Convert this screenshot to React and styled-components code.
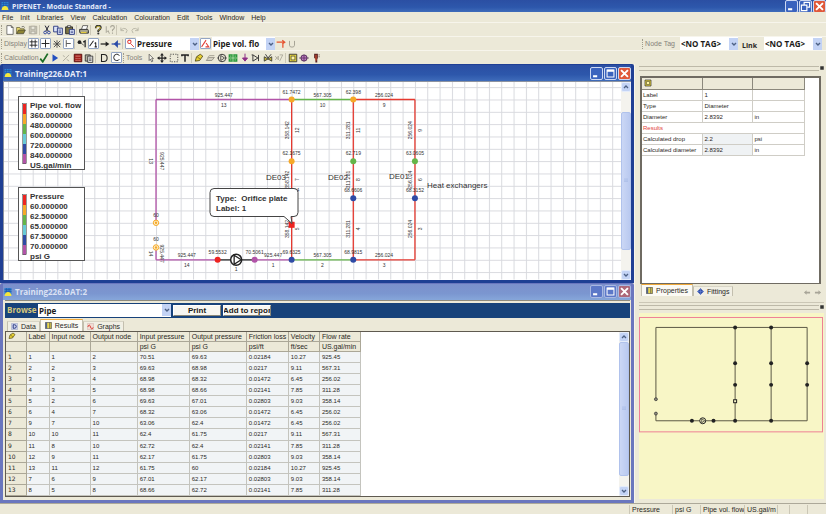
import React from 'react';
import styled, { createGlobalStyle, css, ThemeProvider } from 'styled-components';

const theme = {
  face: '#ece9d8',
  line: '#aca899',
  dark: '#5f5a50',
  active: 'linear-gradient(#2b4fa3, #2d57ab 60%, #3f6cba)',
  inactive: 'linear-gradient(#7c90cc, #7b96d0 60%, #86a6da)',
  ui: '"Liberation Sans", Arial, sans-serif',
  strong: '"Open Sans", "Noto Sans", sans-serif',
};

const GlobalStyle = createGlobalStyle`
  * { box-sizing: border-box; }
  body {
    margin: 0;
    background: #ece9d8;
    color: #2a2824;
    font: 7px/9px "Liberation Sans", Arial, sans-serif;
  }
  button, select { font: inherit; color: inherit; margin: 0; padding: 0; border: 0; background: none; }
`;

/* ---------- shell ---------- */

const Shell = styled.div`
  display: flex;
  flex-direction: column;
  height: 100vh;
  overflow: hidden;
`;

const TitleBar = styled.header`
  display: flex;
  align-items: center;
  gap: 2px;
  height: 12px;
  padding-left: 1px;
  overflow: hidden;
  background: ${({ theme: t }) => t.active};
  color: #e4eafa;
  font-family: ${({ theme: t }) => t.strong};
  font-weight: 700;
  h1 {
    flex: 1;
    margin: 0;
    padding-left: 1px;
    font-size: 7px;
    line-height: 9px;
  }
`;

const MenuBar = styled.nav`
  display: flex;
  gap: 7px;
  height: 10px;
  padding-left: 2px;
  align-items: center;
`;

const Toolbar = styled.div`
  display: flex;
  align-items: center;
  height: 14px;
  padding-left: 1px;
  border-top: 1px solid #f7f5ec;
`;

const Grip = styled.span`
  width: 3px;
  height: 10px;
  border-left: 1px dotted #a09c8c;
`;

const Separator = styled.span`
  width: 2px;
  height: 10px;
  border-left: 1px solid #cbc7b6;
`;

const ToolLabel = styled.span`
  width: ${({ $width }) => $width}px;
  color: #85827a;
  white-space: nowrap;
`;

const ToolGroup = styled.div`
  display: flex;
  justify-content: space-around;
  align-items: center;
  width: ${({ $width }) => $width}px;
`;

const ToolButton = styled.button`
  display: grid;
  place-items: center;
  width: 11px;
  height: 11px;
  ${({ $pressed }) => $pressed && css`
    background: #fff;
    border: 1px solid #93a5c4;
    border-radius: 1px;
  `}
  svg {
    width: ${({ $pressed }) => ($pressed ? 9 : 10)}px;
    height: ${({ $pressed }) => ($pressed ? 9 : 10)}px;
  }
`;

const Combo = styled.span`
  display: grid;
  grid-template-columns: 1fr 9px;
  align-items: center;
  width: ${({ $width }) => $width}px;
  height: 13px;
  background: #fff;
  select {
    appearance: none;
    grid-area: 1 / 1 / 2 / 3;
    height: 13px;
    padding: 1px 0 0 1px;
    color: #1c1a18;
    font: 700 8px/12px ${({ theme: t }) => t.strong};
  }
  svg {
    grid-area: 1 / 2 / 2 / 3;
    width: 9px;
    height: 12px;
    pointer-events: none;
  }
`;

const TagTools = styled.div`
  display: flex;
  align-items: center;
  margin-left: auto;
  padding-right: 4px;
`;

const LinkLabel = styled.label`
  margin: 3px 7px 0 4px;
  font: 700 7px/9px ${({ theme: t }) => t.strong};
`;

const NodeLabel = styled.label`
  margin-right: 5px;
  color: #85827a;
  white-space: nowrap;
`;

/* ---------- document windows ---------- */

const Workspace = styled.main`
  display: flex;
  flex: 1;
  min-height: 0;
`;

const Documents = styled.div`
  display: flex;
  flex-direction: column;
  flex: 1;
  min-width: 0;
`;

const DocWindow = styled.section`
  display: flex;
  flex-direction: column;
  flex: ${({ $size }) => $size};
  min-height: 0;
  border: 1px solid ${({ $active }) => ($active ? '#1f3f94' : '#6a76be')};
  border-width: 1px 3px 3px;
  border-radius: 2px 2px 0 0;
  background: ${({ theme: t }) => t.face};
`;

const DocTitle = styled.header`
  display: flex;
  align-items: center;
  height: 16px;
  padding-left: 1px;
  background: ${({ theme: t, $active }) => ($active ? t.active : t.inactive)};
  color: ${({ $active }) => ($active ? '#e8edfb' : '#dbe2f4')};
  h2 {
    flex: 1;
    margin: 0 0 0 3px;
    font: 700 8px/11px ${({ theme: t }) => t.strong};
  }
`;

const Controls = styled.div`
  display: flex;
  gap: 1px;
`;

const ControlButton = styled.button`
  display: grid;
  width: 13px;
  height: 13px;
  border: 1px solid ${({ $dim }) => ($dim ? '#a9b8e2' : '#cdd8f2')};
  border-radius: 2px;
  background: ${({ $close, $dim }) => {
    if ($close) return $dim ? '#ad6879' : '#e0583a';
    return $dim ? '#5c78c8' : '#3a63be';
  }};
  svg { width: 11px; height: 11px; }
`;

const Canvas = styled.div`
  display: flex;
  flex: 1;
  min-height: 0;
  border: 1px solid #8d93a0;
  border-width: 1px 0 0 1px;
  background: #fff;
  > svg { flex: 1; min-width: 0; height: 100%; }
`;

const ScrollTrack = styled.div`
  display: flex;
  flex-direction: column;
  width: 10px;
  background: #f4f3ee;
`;

const ScrollButton = styled.button`
  width: 10px;
  height: 10px;
  border: 1px solid #e4ecfb;
  border-radius: 2px;
  background: #c3d3f5;
  display: grid;
  svg { width: 8px; height: 8px; }
`;

const ScrollThumb = styled.div`
  display: grid;
  place-items: center;
  flex: ${({ $size }) => $size};
  border: 1px solid #b0c2ec;
  border-radius: 2px;
  background: linear-gradient(90deg, #cbd7f5, #b9c9f0);
  color: #9fb3e0;
  svg { width: 4px; height: 5px; }
`;

const ScrollSpace = styled.span`
  flex: ${({ $size }) => $size};
`;

/* ---------- results browser ---------- */

const Browser = styled.div`
  display: flex;
  flex-direction: column;
  flex: 1;
  min-height: 0;
  margin: 0 1px 3px 2px;
  padding-top: 2px;
  border-top: 1px solid #8e8a7c;
`;

const BrowseBar = styled.div`
  display: flex;
  align-items: center;
  height: 15px;
  margin-bottom: 1px;
  padding-left: 2px;
  background: #17427a;
  color: #d6c77a;
  label { width: 31px; font: 700 8px/12px ${({ theme: t }) => t.strong}; }
`;

const PushButton = styled.button`
  width: 48px;
  height: 11px;
  margin-left: 2px;
  overflow: hidden;
  display: flex;
  justify-content: center;
  align-items: center;
  white-space: nowrap;
  background: #f7f6f1;
  border: 1px solid;
  border-color: #fff #8b8878 #8b8878 #fff;
  color: #1c1a18;
  font: 700 8px/9px ${({ theme: t }) => t.ui};
`;

const Tabs = styled.div`
  display: flex;
  align-items: flex-end;
  padding-left: ${({ $indent }) => $indent || 0}px;
`;

const Tab = styled.button`
  display: flex;
  align-items: center;
  gap: 3px;
  height: ${({ $selected }) => ($selected ? 12 : 10)}px;
  padding: 0 ${({ $selected }) => ($selected ? 4 : 3)}px;
  border: 1px solid #c3bfae;
  border-top-color: ${({ $selected }) => ($selected ? '#f0a93a' : '#d8d5c6')};
  border-bottom: 0;
  background: ${({ $selected }) => ($selected ? '#fbfaf4' : '#f1efe4')};
  color: #2a2824;
  white-space: nowrap;
  svg { width: 7px; height: 7px; }
`;

const GridArea = styled.div`
  display: flex;
  justify-content: space-between;
  flex: 1;
  min-height: 0;
  overflow: hidden;
  border: 1px solid ${({ theme: t }) => t.dark};
  background: #fff;
`;

const ResultTable = styled.table`
  height: 100%;
  border-collapse: collapse;
  table-layout: fixed;
  width: 355px;
  th, td {
    height: 10px;
    padding: 0 2px;
    text-align: left;
    white-space: nowrap;
    font-weight: 400;
    border-right: 1px solid #c4c4be;
    border-bottom: 1px solid #c4c4be;
  }
  th {
    background: #ece9d8;
    border-color: #aba797;
  }
  td {
    background: #f1f4f6;
    font-size: 6px;
    line-height: 8px;
  }
  tbody th { font: 6px/8px "DejaVu Sans", sans-serif; }
  svg { display: block; width: 8px; height: 8px; }
`;

/* ---------- side panels ---------- */

const Side = styled.aside`
  display: flex;
  flex-direction: column;
  width: 192px;
  padding: 2px 2px 0 4px;
  border-left: 1px solid #f7f5ec;
`;

const DockHandle = styled.div`
  display: flex;
  align-items: center;
  justify-content: flex-end;
  height: 4px;
  margin-bottom: ${({ $gap }) => $gap}px;
  &::before {
    content: '';
    flex: 1;
    height: 3px;
    border: 1px solid #bdb9a8;
    border-width: 1px 0;
  }
  svg { width: 4px; height: 4px; margin-left: 1px; }
`;

const Properties = styled.div`
  flex: 1;
  min-height: 0;
  margin: 0 3px 0 1px;
  border: 2px solid #6f6b62;
  border-bottom-width: 1px;
  background: #fff;
  overflow: hidden;
`;

const PropertyTable = styled.table`
  width: 162px;
  border-collapse: collapse;
  table-layout: fixed;
  font-size: 6px;
  line-height: 8px;
  th, td {
    height: 11px;
    padding: 0 2px;
    text-align: left;
    font-weight: 400;
    white-space: nowrap;
    border-right: 1px solid #cfcdc6;
    border-bottom: 1px solid #cfcdc6;
  }
  thead th { background: #ece9d8; border-color: #8b887c; }
  thead svg { display: block; width: 8px; height: 8px; }
  tbody th:first-child { padding-left: 1px; }
`;

const ResultHeading = styled.th`
  color: #e2413a;
`;

const ReadOnly = styled.td`
  background: #eff2f4;
`;

const PanelFooter = styled.div`
  display: flex;
  justify-content: space-between;
  align-items: flex-start;
  height: 19px;
  margin-bottom: 2px;
  padding: 0 2px;
  border-bottom: 1px solid #cbc7b6;
`;

const Pager = styled.div`
  display: flex;
  gap: 3px;
  padding-top: 5px;
  color: #a8a598;
  button { display: grid; }
  svg { width: 8px; height: 7px; }
`;

const Overview = styled.div`
  flex: 0 0 186px;
  margin-bottom: 4px;
  background: #f8f6c6;
  svg { display: block; width: 100%; height: 100%; }
`;

const StatusBar = styled.footer`
  display: flex;
  justify-content: flex-end;
  height: 11px;
  padding-top: 1px;
  border-top: 1px solid ${({ theme: t }) => t.line};
  overflow: hidden;
`;

const StatusCell = styled.span`
  width: ${({ $width }) => $width}px;
  padding-left: 2px;
  border-left: 1px solid #cbc7b6;
  white-space: nowrap;
`;

/* ---------- icons ---------- */

const glyphs = {
  new: <path d="M3 1h7l3 3v11H3zM10 1v3h3" fill="#fff" stroke="#333" />,
  open: <><path d="M1 14V4h5l1 2h6v3" fill="#e9d96b" stroke="#4b4624" /><path d="M1 14l3-6h11l-3 6z" fill="#8d8434" stroke="#333" /><path d="M9 3q3-2 5 1" fill="none" stroke="#333" /></>,
  save: <><path d="M2 2h12v12H2z" fill="#c9c6b8" stroke="#a09d90" /><path d="M5 2h6v5H5zM5 10h6v4H5z" fill="#e9e7dc" stroke="#a09d90" /></>,
  cut: <><path d="M5 1l5 9M11 1L6 10" stroke="#223" strokeWidth="1.6" /><circle cx="5" cy="12" r="2.2" fill="none" stroke="#33489c" strokeWidth="1.6" /><circle cx="11" cy="12" r="2.2" fill="none" stroke="#33489c" strokeWidth="1.6" /></>,
  copy: <><path d="M1 2h7v9H1z" fill="#dce4f8" stroke="#26337e" strokeWidth="1.4" /><path d="M7 5h8v10H7z" fill="#dce4f8" stroke="#26337e" strokeWidth="1.4" /><path d="M9 8h4M9 10h4M9 12h4" stroke="#26337e" /></>,
  paste: <><path d="M1 3h11v11H1z" fill="#7c7443" stroke="#222" strokeWidth="1.4" /><path d="M4 1h5v3H4z" fill="#ddd" stroke="#222" /><path d="M7 7h8v8H7z" fill="#dce4f8" stroke="#26337e" strokeWidth="1.4" /><path d="M9 10h4M9 12h4" stroke="#26337e" /></>,
  print: <><path d="M4 7l2-6h8l-2 6" fill="#fff" stroke="#222" /><path d="M1 7h13l1 2v4H2l-1-2z" fill="#a9a692" stroke="#222" strokeWidth="1.4" /><path d="M3 12h9" stroke="#e2c93b" strokeWidth="2" /></>,
  help: <><path d="M4.500 5q0-4 4-4t4 3.500q0 2-4 4.500v2" fill="none" stroke="#333" strokeWidth="3" /><path d="M5 5q0-3 3.500-3t3.500 2.500q0 2-3.500 4" fill="none" stroke="#d9c62b" strokeWidth="1.200" /><circle cx="8.500" cy="13.500" r="1.700" fill="#333" /></>,
  what: <><path d="M2 2v10l3-3 2 5" fill="none" stroke="#a7a496" strokeWidth="1.500" /><path d="M9 4q0-3 3-3t3 3q0 2-3 4v2M12 12v2" fill="none" stroke="#a7a496" strokeWidth="1.700" /></>,
  undo: <path d="M3 4v5h5M3 8q4-4 8-2t0 7" fill="none" stroke="#b9b6a6" strokeWidth="1.500" />,
  redo: <path d="M13 4v5H8M13 8q-4-4-8-2t0 7" fill="none" stroke="#b9b6a6" strokeWidth="1.500" />,
  grid: <path d="M5 1v14M11 1v14M1 5h14M1 11h14" stroke="#222" strokeWidth="1.600" />,
  plus: <path d="M8 1v14M1 8h14" stroke="#222" strokeWidth="1.700" />,
  star: <path d="M8 2v12M2 8h12M3 3l10 10M13 3L3 13" stroke="#444" strokeWidth="1.400" />,
  tee: <path d="M4 2v12M4 8h8" stroke="#555" strokeWidth="1.700" />,
  nodes: <><circle cx="4" cy="5" r="3" fill="#222" /><path d="M4 5l7 5" stroke="#222" /><path d="M10 5l3-2v10" fill="none" stroke="#222" strokeWidth="2" /></>,
  pipe: <path d="M1 13L8 3M12 6v8M10 8l2-2M10 14h4" fill="none" stroke="#222" strokeWidth="1.800" />,
  arrowHead: <><path d="M1 8h9" stroke="#222" strokeWidth="2" /><path d="M9 4l6 4-6 4z" fill="#222" /></>,
  blueArrow: <><path d="M1 8h14" stroke="#2a4ba8" strokeWidth="2" /><path d="M6 8l4-4v8z" fill="#2a4ba8" stroke="#2a4ba8" strokeWidth="2" /></>,
  redNode: <><circle cx="6" cy="5" r="3" fill="none" stroke="#e23c34" strokeWidth="1.800" /><path d="M8 8l6 6" stroke="#e23c34" strokeWidth="1.600" /></>,
  redPipe: <path d="M1 14L9 2M9 7l5 7H8" fill="none" stroke="#e23c34" strokeWidth="1.800" />,
  redArrow: <path d="M1 5h13M10 2l4 3-4 3M11 8v6" fill="none" stroke="#e6532f" strokeWidth="2" />,
  unit: <path d="M4 3v7q0 3 4 3t4-3V3" fill="none" stroke="#a7a496" strokeWidth="1.600" />,
  check: <path d="M2 9l4 5L14 1" fill="none" stroke="#1c6d25" strokeWidth="2.800" />,
  play: <path d="M4 2l9 6-9 6z" fill="#2450c0" />,
  graph: <path d="M3 13L13 3M3 4l3 2M9 10l4 3" stroke="#b4b1a3" strokeWidth="1.600" />,
  calendar: <><path d="M2 2h12v12H2z" fill="#a6201c" stroke="#5f1512" strokeWidth="1.600" /><path d="M4 9h8M4 12h8" stroke="#e8b6a6" strokeDasharray="2 1" /><path d="M4 5h8" stroke="#e8b6a6" /></>,
  report: <><path d="M2 3h8v10H2z" fill="#b5b1a0" stroke="#333" strokeWidth="1.400" /><path d="M6 5h8v10H6z" fill="#eee" stroke="#333" strokeWidth="1.400" /><path d="M8 8h4M8 10h4M8 12h4" stroke="#333" /></>,
  letterD: <path d="M4 2.500h4q5 0 5 5.500t-5 5.500H4z" fill="none" stroke="#222" strokeWidth="1.700" />,
  letterC: <path d="M13 5q-1-3-4.500-3Q3 2.500 3 8t5.500 5.500Q12 13.500 13 11" fill="none" stroke="#222" strokeWidth="1.700" />,
  cursor: <path d="M5 2v10l2-2 2 4 2-1-2-4h3z" fill="#f4f2ea" stroke="#333" />,
  move: <><path d="M8 3v10M3 8h10" stroke="#222" strokeWidth="2" /><path d="M8 0l3 4H5zM8 16l3-4H5zM0 8l4-3v6zM16 8l-4-3v6z" fill="#222" /></>,
  marquee: <path d="M2 2h12v12H2z" fill="none" stroke="#333" strokeWidth="1.300" strokeDasharray="2 2" />,
  text: <path d="M3 3h10M8 3v11M3 2v3M13 2v3" stroke="#222" strokeWidth="2.400" />,
  pencil: <><path d="M2 13l2-7 6-4 4 3-5 7z" fill="#e6cf35" stroke="#4b4412" strokeWidth="1.300" /><path d="M5 6l5 4" stroke="#4b4412" /></>,
  eraser: <><path d="M2 12l4-5h9l-4 5z" fill="#d2cfc0" stroke="#8b887c" strokeWidth="1.300" /><path d="M4 8l3-4h8" fill="none" stroke="#8b887c" /></>,
  pump: <><circle cx="8" cy="8" r="6" fill="none" stroke="#333" strokeWidth="1.500" /><path d="M6 4l6 4-6 4z" fill="none" stroke="#333" strokeWidth="1.300" /><path d="M0 8h2M14 8h2" stroke="#333" /></>,
  exchanger: <><path d="M1 2h14v12H1z" fill="#27963a" /><path d="M8 2v12M1 8h14M4.500 4v2M11.500 4v2M4.500 10v2M11.500 10v2" stroke="#c8e8b8" strokeWidth="1.200" /></>,
  nozzle: <path d="M8 1v8M4 8h8l-4 5z" fill="#8e2e86" stroke="#8e2e86" strokeWidth="1.600" />,
  diode: <path d="M3 3v10l8-5zM12 3v10M1 3h2" fill="none" stroke="#333" strokeWidth="1.500" />,
  valve: <><path d="M2 6l12 7V6L2 13z" fill="#c7b834" stroke="#333" strokeWidth="1.300" /><path d="M4 2l4 6 5-6" fill="none" stroke="#333" strokeWidth="1.500" /></>,
  ghost: <path d="M2 5l5 6V5l-5 6M9 13l5-10M9 3h5" fill="none" stroke="#aaa798" strokeWidth="1.400" />,
  box: <><path d="M2 2h12v12H2z" fill="#e3d13a" stroke="#333" strokeWidth="1.400" /><path d="M5 5h6v6H5z" fill="#fff6a0" stroke="#333" /></>,
  tank: <><circle cx="8" cy="8" r="5" fill="#b878bd" stroke="#4a2352" strokeWidth="1.400" /><path d="M0 8h16M8 3v10" stroke="#4a2352" /></>,
  gauge: <><path d="M5 1h6v7l-1 2v5H7V9L5 8z" fill="#5b2626" /><path d="M8 3v9" stroke="#e6532f" strokeWidth="1.600" /><path d="M12 3h2M12 6h2" stroke="#5b2626" /></>,
  table: <><path d="M1 1h14v14H1z" fill="#e8d64a" stroke="#555" strokeWidth="1.600" /><path d="M1 1h4v14H1z" fill="#55648c" /><path d="M11 1v14" stroke="#555" strokeWidth="2" /></>,
  wave: <><path d="M1 1h14v14H1z" fill="#f2dcd4" stroke="#c9a7a0" /><path d="M2 9q3-9 6 0t6 1" fill="none" stroke="#d9362e" strokeWidth="2.200" /></>,
  data: <><path d="M1 1h14v14H1z" fill="#cfd6ee" stroke="#8791bd" /><path d="M5 4h3q4 0 4 4t-4 4H5z" fill="none" stroke="#25347f" strokeWidth="2.200" /></>,
  fitting: <><path d="M8 1l7 7-7 7-7-7z" fill="#2c4aa8" stroke="#2c4aa8" /><path d="M8 0v16M0 8h16" stroke="#6f8ad8" strokeWidth="1.200" /></>,
  back: <path d="M7 3v3h8v4H7v3L1 8z" fill="currentColor" />,
  forward: <path d="M9 3v3H1v4h8v3l6-5z" fill="currentColor" />,
  min: <path d="M3 12h6" stroke="#fff" strokeWidth="3" />,
  max: <><path d="M3 3h10v10H3z" fill="none" stroke="#fff" strokeWidth="1.500" /><path d="M3 4h10" stroke="#fff" strokeWidth="3" /></>,
  restore: <path d="M6 5V2h8v7h-3M2 6h8v8H2z" fill="none" stroke="#fff" strokeWidth="1.700" />,
  close: <path d="M3 3l10 10M13 3L3 13" stroke="#fff" strokeWidth="2.800" />,
  up: <path d="M4 10l4-4 4 4" fill="none" stroke="#4d6185" strokeWidth="2.600" />,
  down: <path d="M4 6l4 4 4-4" fill="none" stroke="#4d6185" strokeWidth="2.600" />,
  logo: <><path d="M1 0h14v12H1z" fill="#2f7fcf" /><path d="M1 3h14M1 7h14M5 0v10M10 0v10" stroke="#1d4f9c" /><path d="M1 16q1-8 7-8t7 8z" fill="#f5e63c" /></>,
  pin: <path d="M1 1h14v14H1z" fill="#333" />,
  grip: <path d="M0 2h16M0 7h16M0 12h16" stroke="currentColor" strokeWidth="2" />,
};

const Icon = ({ name, size = 9 }) => (
  <svg viewBox="0 0 16 16" width={size} height={size} aria-hidden="true">{glyphs[name]}</svg>
);

const Tools = ({ names, width, pressed = [] }) => (
  <ToolGroup $width={width}>
    {names.map((name) => (
      <ToolButton key={name} type="button" aria-label={name} $pressed={pressed.includes(name)}>
        <Icon name={name} />
      </ToolButton>
    ))}
  </ToolGroup>
);

const DropDown = ({ id, label, value, width }) => (
  <Combo $width={width}>
    <select id={id} aria-label={label} defaultValue={value}>
      <option>{value}</option>
    </select>
    <svg viewBox="0 0 9 12" aria-hidden="true">
      <path d="M0 0h9v12H0z" fill="#c3d3f5" />
      <path d="M3 5l2 2 2-2" fill="none" stroke="#4d6185" strokeWidth="1.400" />
    </svg>
  </Combo>
);

const WindowControls = ({ dim, middle = 'max' }) => (
  <Controls>
    <ControlButton type="button" aria-label="Minimize" $dim={dim}><Icon name="min" /></ControlButton>
    <ControlButton type="button" aria-label="Maximize" $dim={dim}><Icon name={middle} /></ControlButton>
    <ControlButton type="button" aria-label="Close" $close $dim={dim}><Icon name="close" /></ControlButton>
  </Controls>
);

const ScrollBar = ({ before, size, after }) => (
  <ScrollTrack>
    <ScrollButton type="button" aria-label="Scroll up"><Icon name="up" /></ScrollButton>
    <ScrollSpace $size={before} />
    <ScrollThumb $size={size}><Icon name="grip" /></ScrollThumb>
    <ScrollSpace $size={after} />
    <ScrollButton type="button" aria-label="Scroll down"><Icon name="down" /></ScrollButton>
  </ScrollTrack>
);

/* ---------- network model, in grid cells ---------- */

const MAGENTA = '#b253a8';
const RED = '#e5392f';
const GREEN = '#64b548';
const BLUE = '#2f4ba5';
const ORANGE = '#f6a928';

const pipes = [
  { from: [0, 0], to: [11, 0], color: MAGENTA, value: '925.447', no: 13 },
  { from: [0, 0], to: [0, 10], color: MAGENTA, value: '925.447', no: 13, flip: true },
  { from: [0, 12], to: [0, 13], color: MAGENTA, value: '925.447', no: 14, flip: true },
  { from: [0, 13], to: [5, 13], color: MAGENTA, value: '925.447', no: 14 },
  { from: [8, 13], to: [11, 13], color: MAGENTA, value: '925.447', no: 1 },
  { from: [11, 0], to: [16, 0], color: GREEN, value: '567.305', no: 10 },
  { from: [16, 0], to: [21, 0], color: RED, value: '256.024', no: 9 },
  { from: [11, 13], to: [16, 13], color: GREEN, value: '567.305', no: 2 },
  { from: [16, 13], to: [21, 13], color: RED, value: '256.024', no: 3 },
  { from: [11, 0], to: [11, 5], color: RED, value: '358.142', no: 12 },
  { from: [11, 5], to: [11, 8], color: RED, value: '358.142', no: 7 },
  { from: [11, 8], to: [11, 13], color: RED, value: '358.142', no: 5 },
  { from: [16, 0], to: [16, 5], color: RED, value: '311.281', no: 11 },
  { from: [16, 5], to: [16, 8], color: RED, value: '311.281', no: 8 },
  { from: [16, 8], to: [16, 13], color: RED, value: '311.281', no: 4 },
  { from: [21, 0], to: [21, 5], color: RED, value: '256.024', no: 9 },
  { from: [21, 5], to: [21, 8], color: RED, value: '256.024', no: 6 },
  { from: [21, 8], to: [21, 13], color: RED, value: '256.024', no: 3 },
];

const nodes = [
  { at: [11, 0], color: ORANGE, value: '61.7472' },
  { at: [16, 0], color: ORANGE, value: '62.398' },
  { at: [11, 5], color: ORANGE, value: '62.1675' },
  { at: [16, 5], color: GREEN, value: '62.719' },
  { at: [21, 5], color: GREEN, value: '63.0605' },
  { at: [11, 8], color: BLUE, value: '67.014' },
  { at: [16, 8], color: BLUE, value: '68.6606' },
  { at: [21, 8], color: BLUE, value: '68.3152' },
  { at: [5, 13], color: '#ee2420', value: '59.5532' },
  { at: [8, 13], color: MAGENTA, value: '70.5061' },
  { at: [11, 13], color: BLUE, value: '69.6325' },
  { at: [16, 13], color: BLUE, value: '68.9815' },
];

const terminals = [[0, 10], [0, 12]];

const CELL = 12.33;
const cx = (n) => 152 + n * CELL;
const cy = (n) => 17.5 + n * CELL;

const PipeLabel = ({ pipe }) => {
  const { from, to, value, no, flip } = pipe;
  const x = (cx(from[0]) + cx(to[0])) / 2;
  const y = (cy(from[1]) + cy(to[1])) / 2;
  if (from[1] === to[1]) {
    return (
      <>
        <text x={x} y={y - 3}>{value}</text>
        <text x={x} y={y + 7}>{no}</text>
      </>
    );
  }
  const turn = flip ? 90 : -90;
  return (
    <>
      <text transform={`translate(${flip ? x + 4 : x - 3} ${y}) rotate(${turn})`}>{value}</text>
      <text transform={`translate(${flip ? x - 7 : x + 7} ${y}) rotate(${turn})`}>{no}</text>
    </>
  );
};

const Schematic = styled.svg`
  font-family: ${({ theme: t }) => t.ui};
  fill: #333;
  .values { font-size: 5px; text-anchor: middle; }
  .notes { font-size: 8px; }
  .bold { font-size: 8px; font-weight: 700; }
`;

const legends = [
  { y: 14, lines: ['Pipe vol. flow', '360.000000', '480.000000', '600.000000', '720.000000', '840.000000', 'US.gal/min'] },
  { y: 105, lines: ['Pressure', '60.000000', '62.500000', '65.000000', '67.500000', '70.000000', 'psi G'] },
];
const scale = ['#ee2420', ORANGE, GREEN, '#69cbd6', BLUE, MAGENTA];

const Legend = ({ y, lines }) => (
  <g transform={`translate(14 ${y})`}>
    <rect x="0.5" y="0.5" width="66" height="73" fill="#fff" stroke="#555" />
    {scale.map((color, i) => (
      <rect key={color} x="5" y={8 + i * 10} width="3" height="10" fill={color} />
    ))}
    <rect x="4.500" y="7.500" width="4" height="60" fill="none" stroke="#555" strokeWidth="0.600" />
    {lines.map((line, i) => (
      <text key={line} className="bold" x="12" y={12 + i * 10}>{line}</text>
    ))}
  </g>
);

const Network = () => (
  <Schematic role="img" aria-label="Pipe network">
    <defs>
      <pattern id="cells" x={cx(0)} y={cy(0)} width={CELL} height={CELL} patternUnits="userSpaceOnUse">
        <path d={`M0.500 0V${CELL}M0 0.500H${CELL}`} stroke="#d8d9de" fill="none" />
      </pattern>
    </defs>
    <rect width="100%" height="100%" fill="url(#cells)" />
    {legends.map((legend) => <Legend key={legend.y} {...legend} />)}
    {pipes.map(({ from, to, color }) => (
      <line key={`${from}-${to}`} x1={cx(from[0])} y1={cy(from[1])} x2={cx(to[0])} y2={cy(to[1])} stroke={color} strokeWidth="1.300" />
    ))}
    <line x1={cx(5)} y1={cy(13)} x2={cx(8)} y2={cy(13)} stroke="#222" strokeWidth="1.300" />
    <g transform={`translate(${cx(6.5)} ${cy(13)})`} stroke="#222">
      <circle r="5.500" fill="#fff" strokeWidth="1.500" />
      <path d="M-2-4.500L5 0-2 4.500z" fill="#fff" strokeWidth="1.300" />
    </g>
    {nodes.map(({ at, color }) => (
      <circle key={`${at}`} cx={cx(at[0])} cy={cy(at[1])} r="3" fill={color} />
    ))}
    {terminals.map(([x, y]) => (
      <g key={y} transform={`translate(${cx(x)} ${cy(y)})`}>
        <circle r="2.700" fill="#fdf0cf" stroke={ORANGE} />
        <circle r="1.200" fill={ORANGE} />
      </g>
    ))}
    <g className="values">
      {pipes.map((pipe) => <PipeLabel key={`${pipe.from}-${pipe.to}`} pipe={pipe} />)}
      {nodes.map(({ at, value }) => (
        <text key={`${at}`} x={cx(at[0])} y={cy(at[1]) - 6}>{value}</text>
      ))}
      {terminals.map(([x, y]) => <text key={y} x={cx(x)} y={cy(y) - 6}>60</text>)}
      <text x={cx(6.5)} y={cy(13) + 11}>1</text>
    </g>
    <g className="notes">
      <text x="262" y="98">DE03</text>
      <text x="324" y="98">DE02</text>
      <text x="385" y="97">DE01</text>
      <text x="423" y="106">Heat exchangers</text>
    </g>
    <rect x={cx(11) - 3} y={cy(10) - 1} width="6" height="6" fill="#ee2420" />
    <path d="M210 106.500h80q4 0 4 4v20q0 4-4 4h-3l1 7-8-7h-70q-4 0-4-4v-20q0-4 4-4z" fill="#fff" stroke="#444" />
    <text className="bold" x="212" y="119" xmlSpace="preserve">{'Type:  Orifice plate'}</text>
    <text className="bold" x="212" y="129">Label: 1</text>
  </Schematic>
);

const ox = (n) => 17 + n * 7.24;
const oy = (n) => 14.5 + n * 7.22;

const OverviewMap = () => (
  <svg viewBox="0 0 186 186" preserveAspectRatio="xMinYMin meet" role="img" aria-label="Network overview">
    <rect x="0.500" y="4.500" width="184" height="115" fill="none" stroke="#ee7f95" />
    <g stroke="#5b5844" strokeWidth="1">
      {pipes.map(({ from, to }) => (
        <line key={`${from}-${to}`} x1={ox(from[0])} y1={oy(from[1])} x2={ox(to[0])} y2={oy(to[1])} />
      ))}
      <line x1={ox(5)} y1={oy(13)} x2={ox(8)} y2={oy(13)} />
    </g>
    {nodes.map(({ at }) => (
      <circle key={`${at}`} cx={ox(at[0])} cy={oy(at[1])} r="2" fill="#222" />
    ))}
    {terminals.map(([x, y]) => <circle key={y} cx={ox(x)} cy={oy(y)} r="1.500" fill="#8b887c" stroke="#333" strokeWidth="0.700" />)}
    <circle cx={ox(6.5)} cy={oy(13)} r="3" fill="#f8f6c6" stroke="#222" />
    <path d={`M${ox(6.5) - 1} ${oy(13) - 2}l3 2-3 2z`} fill="none" stroke="#222" strokeWidth="0.700" />
    <rect x={ox(11) - 1.5} y={oy(10) + 0.5} width="3" height="3" fill="#f8f6c6" stroke="#222" />
  </svg>
);

/* ---------- data ---------- */

const menus = ['File', 'Init', 'Libraries', 'View', 'Calculation', 'Colouration', 'Edit', 'Tools', 'Window', 'Help'];

const columns = [
  ['Label', '', 23],
  ['Input node', '', 41],
  ['Output node', '', 47],
  ['Input pressure', 'psi G', 52],
  ['Output pressure', 'psi G', 57],
  ['Friction loss', 'psi/ft', 42],
  ['Velocity', 'ft/sec', 31],
  ['Flow rate', 'US.gal/min', 41],
];

const rows = [
  ['1', '1', '2', '70.51', '69.63', '0.02184', '10.27', '925.45'],
  ['2', '2', '3', '69.63', '68.98', '0.0217', '9.11', '567.31'],
  ['3', '3', '4', '68.98', '68.32', '0.01472', '6.45', '256.02'],
  ['4', '3', '5', '68.98', '68.66', '0.02141', '7.85', '311.28'],
  ['5', '2', '6', '69.63', '67.01', '0.02803', '9.03', '358.14'],
  ['6', '4', '7', '68.32', '63.06', '0.01472', '6.45', '256.02'],
  ['9', '7', '10', '63.06', '62.4', '0.01472', '6.45', '256.02'],
  ['10', '10', '11', '62.4', '61.75', '0.0217', '9.11', '567.31'],
  ['11', '8', '10', '62.72', '62.4', '0.02141', '7.85', '311.28'],
  ['12', '9', '11', '62.17', '61.75', '0.02803', '9.03', '358.14'],
  ['13', '11', '12', '61.75', '60', '0.02184', '10.27', '925.45'],
  ['7', '6', '9', '67.01', '62.17', '0.02803', '9.03', '358.14'],
  ['8', '5', '8', '68.66', '62.72', '0.02141', '7.85', '311.28'],
];

const status = [['Pressure', 43], ['psi G', 28], ['Pipe vol. flow', 44], ['US.gal/m', 33], ['', 12], ['', 18], ['', 19]];

/* ---------- page ---------- */

const Results = () => (
  <ResultTable>
    <colgroup>
      <col width="20" />
      {columns.map(([name, , width]) => <col key={name} width={width} />)}
    </colgroup>
    <thead>
      <tr>
        <th aria-label="Row"><Icon name="pencil" /></th>
        {columns.map(([name]) => <th key={name}>{name}</th>)}
      </tr>
      <tr>
        <th aria-label="Unit" />
        {columns.map(([name, unit]) => <th key={name}>{unit}</th>)}
      </tr>
    </thead>
    <tbody>
      {rows.map((row, i) => (
        <tr key={row[0]}>
          <th>{i + 1}</th>
          {row.map((cell, c) => <td key={columns[c][0]}>{cell}</td>)}
        </tr>
      ))}
    </tbody>
  </ResultTable>
);

const PropertyGrid = () => (
  <PropertyTable>
    <colgroup><col width="60" /><col width="50" /><col width="52" /></colgroup>
    <thead>
      <tr><th aria-label="Property"><Icon name="box" /></th><th aria-label="Value" /><th aria-label="Unit" /></tr>
    </thead>
    <tbody>
      <tr><th>Label</th><td>1</td><td /></tr>
      <tr><th>Type</th><td>Diameter</td><td /></tr>
      <tr><th>Diameter</th><td>2.8392</td><td>in</td></tr>
      <tr><ResultHeading colSpan="3">Results</ResultHeading></tr>
      <tr><th>Calculated drop</th><ReadOnly>2.2</ReadOnly><td>psi</td></tr>
      <tr><th>Calculated diameter</th><ReadOnly>2.8392</ReadOnly><td>in</td></tr>
    </tbody>
  </PropertyTable>
);

export default function App() {
  return (
    <ThemeProvider theme={theme}>
      <GlobalStyle />
      <Shell>
        <TitleBar>
          <Icon name="logo" size={8} />
          <h1>PIPENET - Module Standard -</h1>
          <WindowControls middle="restore" />
        </TitleBar>
        <MenuBar>
          {menus.map((menu) => <button key={menu} type="button">{menu}</button>)}
        </MenuBar>
        <Toolbar>
          <Grip />
          <Tools width={35} names={['new', 'open', 'save']} />
          <Separator />
          <Tools width={35} names={['cut', 'copy', 'paste']} />
          <Separator />
          <Tools width={12} names={['print']} />
          <Separator />
          <Tools width={24} names={['help', 'what']} />
          <Separator />
          <Tools width={23} names={['undo', 'redo']} />
        </Toolbar>
        <Toolbar>
          <Grip />
          <ToolLabel $width={24}>Display</ToolLabel>
          <Tools width={46} names={['grid', 'plus', 'star', 'tee']} pressed={['grid', 'plus', 'tee']} />
          <Separator />
          <Tools width={46} names={['nodes', 'pipe', 'arrowHead', 'blueArrow']} pressed={['pipe']} />
          <Separator />
          <Tools width={12} names={['redNode']} pressed={['redNode']} />
          <DropDown label="Node colouring" value="Pressure" width={63} />
          <Tools width={13} names={['redPipe']} pressed={['redPipe']} />
          <DropDown label="Link colouring" value="Pipe vol. flo" width={63} />
          <Tools width={23} names={['redArrow', 'unit']} />
          <TagTools>
            <Grip />
            <NodeLabel htmlFor="node-tag">Node Tag</NodeLabel>
            <DropDown id="node-tag" value="<NO TAG>" width={58} />
            <LinkLabel htmlFor="link-tag">Link</LinkLabel>
            <DropDown id="link-tag" value="<NO TAG>" width={58} />
          </TagTools>
        </Toolbar>
        <Toolbar>
          <Grip />
          <ToolLabel $width={34}>Calculation</ToolLabel>
          <Tools width={57} names={['check', 'play', 'graph', 'calendar', 'report']} />
          <Separator />
          <Tools width={26} names={['letterD', 'letterC']} pressed={['letterC']} />
          <Grip />
          <ToolLabel $width={19}>Tools</ToolLabel>
          <Tools width={46} names={['cursor', 'move', 'marquee', 'text']} />
          <Separator />
          <Tools width={92} names={['pencil', 'eraser', 'pump', 'exchanger', 'nozzle', 'diode', 'valve', 'ghost']} />
          <Separator />
          <Tools width={35} names={['box', 'tank', 'gauge']} />
        </Toolbar>

        <Workspace>
          <Documents>
            <DocWindow $active $size={218}>
              <DocTitle $active>
                <Icon name="logo" size={8} />
                <h2>Training226.DAT:1</h2>
                <WindowControls />
              </DocTitle>
              <Canvas>
                <Network />
                <ScrollBar before={20} size={137} after={20} />
              </Canvas>
            </DocWindow>
            <DocWindow $size={220}>
              <DocTitle>
                <Icon name="logo" size={8} />
                <h2>Training226.DAT:2</h2>
                <WindowControls dim />
              </DocTitle>
              <Browser>
                <BrowseBar>
                  <label htmlFor="browse">Browse</label>
                  <DropDown id="browse" value="Pipe" width={133} />
                  <PushButton type="button">Print</PushButton>
                  <PushButton type="button">Add to repor</PushButton>
                </BrowseBar>
                <Tabs $indent={2}>
                  <Tab type="button"><Icon name="data" />Data</Tab>
                  <Tab type="button" $selected><Icon name="table" />Results</Tab>
                  <Tab type="button"><Icon name="wave" />Graphs</Tab>
                </Tabs>
                <GridArea>
                  <Results />
                  <ScrollBar before={0} size={132} after={10} />
                </GridArea>
              </Browser>
            </DocWindow>
          </Documents>
          <Side>
            <DockHandle $gap={6}><Icon name="pin" /></DockHandle>
            <Properties><PropertyGrid /></Properties>
            <PanelFooter>
              <Tabs>
                <Tab type="button" $selected><Icon name="table" />Properties</Tab>
                <Tab type="button"><Icon name="fitting" />Fittings</Tab>
              </Tabs>
              <Pager>
                <button type="button" aria-label="Previous"><Icon name="back" /></button>
                <button type="button" aria-label="Next"><Icon name="forward" /></button>
              </Pager>
            </PanelFooter>
            <DockHandle $gap={4}><Icon name="pin" /></DockHandle>
            <Overview><OverviewMap /></Overview>
          </Side>
        </Workspace>
        <StatusBar>
          {status.map(([text, width], i) => <StatusCell key={i} $width={width}>{text}</StatusCell>)}
        </StatusBar>
      </Shell>
    </ThemeProvider>
  );
}
